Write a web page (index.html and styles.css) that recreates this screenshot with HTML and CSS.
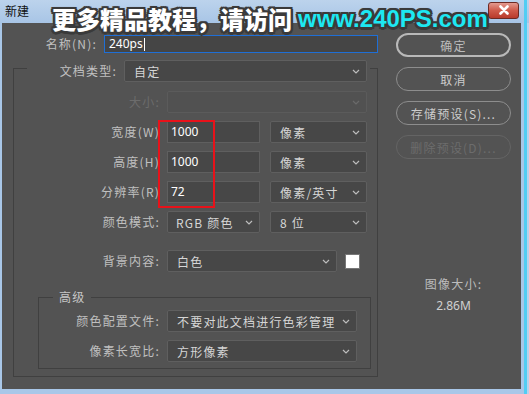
FILE: index.html
```html
<!DOCTYPE html>
<html lang="zh">

<head>
    <meta charset="UTF-8">
    <title>新建</title>
    <link rel="stylesheet" href="styles.css">
</head>

<body>

    <div class="window">
        <div class="titlebar">
            <span class="title">新建</span>
            <div class="close-btn">
                <svg width="14" height="10" viewBox="0 0 14 10"><path d="M3.5 1.5l7 7M10.5 1.5l-7 7" /></svg>
            </div>
        </div>

        <div class="client">
            <div class="form-col">
                <div class="name-row">
                    <span class="label name-label">名称(N):</span>
                    <div class="name-input">240ps<span class="caret"></span></div>
                </div>

                <fieldset class="group">
                    <legend class="group-legend">
                        <div class="row">
                            <span class="label type-label">文档类型:</span>
                            <div class="select type-select"><span>自定</span><svg class="chev" viewBox="0 0 8 5"><path d="M1 1l3 3 3-3" /></svg></div>
                        </div>
                    </legend>

                    <div class="row row-first">
                        <span class="label disabled">大小:</span>
                        <div class="select size-select disabled"><span></span><svg class="chev" viewBox="0 0 8 5"><path d="M1 1l3 3 3-3" /></svg></div>
                    </div>
                    <div class="row">
                        <span class="label">宽度(W)</span>
                        <div class="field">1000</div>
                        <div class="select unit-select"><span>像素</span><svg class="chev" viewBox="0 0 8 5"><path d="M1 1l3 3 3-3" /></svg></div>
                    </div>
                    <div class="row">
                        <span class="label">高度(H)</span>
                        <div class="field">1000</div>
                        <div class="select unit-select"><span>像素</span><svg class="chev" viewBox="0 0 8 5"><path d="M1 1l3 3 3-3" /></svg></div>
                    </div>
                    <div class="row">
                        <span class="label">分辨率(R)</span>
                        <div class="field">72</div>
                        <div class="select unit-select"><span>像素/英寸</span><svg class="chev" viewBox="0 0 8 5"><path d="M1 1l3 3 3-3" /></svg></div>
                    </div>
                    <div class="row">
                        <span class="label">颜色模式:</span>
                        <div class="select mode-select"><span>RGB 颜色</span><svg class="chev" viewBox="0 0 8 5"><path d="M1 1l3 3 3-3" /></svg></div>
                        <div class="select unit-select"><span>8 位</span><svg class="chev" viewBox="0 0 8 5"><path d="M1 1l3 3 3-3" /></svg></div>
                    </div>
                    <div class="row row-bg">
                        <span class="label">背景内容:</span>
                        <div class="select bg-select"><span>白色</span><svg class="chev" viewBox="0 0 8 5"><path d="M1 1l3 3 3-3" /></svg></div>
                        <div class="swatch"></div>
                    </div>

                    <fieldset class="advanced">
                        <legend class="advanced-legend">高级</legend>
                        <div class="row row-adv-first">
                            <span class="label adv-label">颜色配置文件:</span>
                            <div class="select adv-select"><span>不要对此文档进行色彩管理</span><svg class="chev" viewBox="0 0 8 5"><path d="M1 1l3 3 3-3" /></svg></div>
                        </div>
                        <div class="row">
                            <span class="label adv-label">像素长宽比:</span>
                            <div class="select adv-select"><span>方形像素</span><svg class="chev" viewBox="0 0 8 5"><path d="M1 1l3 3 3-3" /></svg></div>
                        </div>
                    </fieldset>
                </fieldset>
            </div>

            <div class="side-col">
                <div class="btn btn-default">确定</div>
                <div class="btn">取消</div>
                <div class="btn">存储预设(S)...</div>
                <div class="btn disabled">删除预设(D)...</div>

                <div class="img-size">
                    <div class="img-size-label">图像大小:</div>
                    <div class="img-size-value">2.86M</div>
                </div>
            </div>
        </div>

        <!-- watermark and red marker sit over the dialog -->
        <div class="watermark"><span class="wm-cn">更多精品教程，请访问</span><span class="wm-url">www.240PS.com</span></div>
        <div class="highlight"></div>
    </div>

</body>

</html>
```

FILE: styles.css
```css
* {
    box-sizing: border-box;
}

html,
body {
    margin: 0;
    padding: 0;
    background: #aecbea;
    font-family: "Noto Sans CJK SC", "Noto Sans", sans-serif;
}

.window {
    position: relative;
    width: 529px;
    height: 394px;
    display: flex;
    flex-direction: column;
    background: linear-gradient(to right, #a9c7e8 0 524px, #52cdf3 524px 527px, #b6d3ee 527px);
}

.titlebar {
    height: 23px;
    display: flex;
    align-items: center;
    justify-content: space-between;
    padding: 0 10px 0 5px;
    background: linear-gradient(to right, transparent 524px, #52cdf3 524px 527px, transparent 527px),
        linear-gradient(#bcd3ec, #a8c5e6);
}

.title {
    font-size: 12px;
    line-height: 14px;
    color: #111;
    margin-top: -2px;
}

.close-btn {
    width: 31px;
    height: 17px;
    margin-top: -3px;
    border: 1px solid #6e2a24;
    border-radius: 3px;
    background: linear-gradient(#e39a8f, #cf5a4a 50%, #b83a2c);
    display: flex;
    align-items: center;
    justify-content: center;
}

.close-btn path {
    stroke: #fff;
    stroke-width: 2.6;
    stroke-linecap: round;
    fill: none;
}

.client {
    width: 519px;
    height: 366px;
    margin-left: 2px;
    background: #535353;
    display: flex;
    color: #c6c6c6;
    font-size: 12px;
    letter-spacing: 1.2px;
}

.form-col {
    width: 379px;
    padding: 12px 0 0 11px;
}

.label {
    line-height: 16px;
    text-align: right;
    color: #c0c0c0;
    white-space: nowrap;
}

.label.disabled {
    color: #6c6c6c;
}

.name-row {
    display: flex;
    align-items: center;
}

.name-label {
    width: 84px;
    margin-right: 7px;
}

.name-input {
    width: 274px;
    height: 18px;
    border: 1px solid #1f6fd6;
    background: #454545;
    color: #fff;
    font-family: "Noto Sans", sans-serif;
    font-size: 12px;
    letter-spacing: 0;
    line-height: 16px;
    padding-left: 4px;
    display: flex;
    align-items: center;
}

.caret {
    width: 1px;
    height: 13px;
    background: #fff;
    margin-left: 1px;
}

.group {
    width: 365px;
    margin: 1px 0 0;
    padding: 0 0 7px;
    border: 1px solid #404040;
    min-width: 0;
}

.group-legend {
    margin-left: 13px;
    padding: 6px 3px 0 0;
}

.row {
    display: flex;
    align-items: center;
    margin-top: 8px;
}

.group-legend .row {
    margin-top: 0;
}

.row .label {
    width: 146px;
    margin-right: 7px;
}

.row .type-label {
    width: 90px;
}

.row-first {
    margin-top: 9px;
}

.row-bg {
    margin-top: 17px;
}

.select {
    height: 22px;
    display: flex;
    align-items: center;
    justify-content: space-between;
    padding: 0 6px 0 9px;
    background: #474747;
    border: 1px solid #5f5f5f;
    border-radius: 2px;
    color: #d6d6d6;
    white-space: nowrap;
}

.select.disabled {
    background: #515151;
    border-color: #5b5b5b;
}

.select.disabled .chev path {
    stroke: #6a6a6a;
}

.chev {
    width: 8px;
    height: 5px;
    flex-shrink: 0;
}

.chev path {
    fill: none;
    stroke: #bdbdbd;
    stroke-width: 1.2;
}

.type-select {
    width: 243px;
}

.size-select {
    width: 200px;
}

.field {
    width: 93px;
    height: 22px;
    background: #474747;
    border: 1px solid #5f5f5f;
    color: #fff;
    font-family: "Noto Sans", sans-serif;
    letter-spacing: 0;
    line-height: 20px;
    padding-left: 3px;
}

.unit-select {
    width: 97px;
    margin-left: 10px;
}

.mode-select {
    width: 93px;
    padding-left: 8px;
}

.bg-select {
    width: 170px;
}

.swatch {
    width: 15px;
    height: 15px;
    margin-left: 8px;
    background: #fff;
    border: 1px solid #777;
}

.advanced {
    width: 333px;
    margin: 18px 0 0 24px;
    padding: 0 0 6px;
    border: 1px solid #404040;
    min-width: 0;
}

.advanced-legend {
    margin-left: 14px;
    padding: 0 6px;
    line-height: 14px;
    color: #c6c6c6;
}

.row .adv-label {
    width: 121px;
}

.row-adv-first {
    margin-top: 6px;
}

.adv-select {
    width: 190px;
}

.side-col {
    width: 140px;
    padding: 10px 0 0 15px;
    display: flex;
    flex-direction: column;
}

.btn {
    width: 115px;
    height: 24px;
    margin-bottom: 10px;
    border: 1.5px solid #8d8d8d;
    border-radius: 12px;
    display: flex;
    align-items: center;
    justify-content: center;
    color: #cccccc;
}

.btn-default {
    border: 2px solid #b9b9b9;
    color: #bcbcbc;
}

.btn.disabled {
    border-color: #646464;
    color: #6c6c6c;
}

.img-size {
    margin-top: 107px;
    width: 115px;
    text-align: center;
    color: #bdbdbd;
    line-height: 16px;
}

.img-size-value {
    margin-top: 6px;
    font-family: "Noto Sans", sans-serif;
    letter-spacing: 0;
    color: #d0d0d0;
}

.watermark {
    position: absolute;
    left: 52px;
    top: 6px;
    display: flex;
    gap: 6px;
    font-size: 24px;
    line-height: 26px;
    font-weight: 900;
    white-space: nowrap;
    text-shadow: -2px -2px 0 #3a3a3a, 2px -2px 0 #3a3a3a, -2px 2px 0 #3a3a3a, 2px 2px 0 #3a3a3a,
        0 -2.5px 0 #3a3a3a, 0 2.5px 0 #3a3a3a, -2.5px 0 0 #3a3a3a, 2.5px 0 0 #3a3a3a, 0 0 3px #3a3a3a;
}

.wm-cn,
.wm-url {
    display: block;
    height: 26px;
}

.wm-cn {
    color: #fff;
    font-family: "Noto Sans CJK SC", sans-serif;
}

.wm-url {
    color: #1de8f2;
    font-family: "Liberation Sans", Arial, sans-serif;
    font-weight: bold;
}

.highlight {
    position: absolute;
    left: 158px;
    top: 120px;
    width: 57px;
    height: 88px;
    border: 2px solid #e8121a;
}
```
